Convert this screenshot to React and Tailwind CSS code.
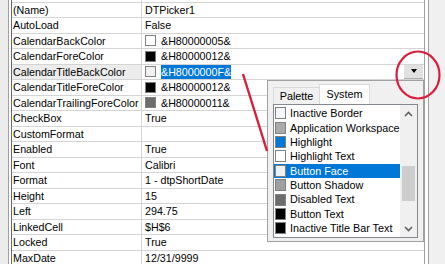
import React from 'react';

const rows = [
  { name: '(About)', value: '' },
  { name: '(Name)', value: 'DTPicker1' },
  { name: 'AutoLoad', value: 'False' },
  { name: 'CalendarBackColor', value: '&H80000005&', swatch: 'bg-white' },
  { name: 'CalendarForeColor', value: '&H80000012&', swatch: 'bg-black' },
  { name: 'CalendarTitleBackColor', value: '&H8000000F&', swatch: 'bg-[#f0f0f0]', selected: true },
  { name: 'CalendarTitleForeColor', value: '&H80000012&', swatch: 'bg-black' },
  { name: 'CalendarTrailingForeColor', value: '&H80000011&', swatch: 'bg-[#6d6d6d]' },
  { name: 'CheckBox', value: 'True' },
  { name: 'CustomFormat', value: '' },
  { name: 'Enabled', value: 'True' },
  { name: 'Font', value: 'Calibri' },
  { name: 'Format', value: '1 - dtpShortDate' },
  { name: 'Height', value: '15' },
  { name: 'Left', value: '294.75' },
  { name: 'LinkedCell', value: '$H$6' },
  { name: 'Locked', value: 'True' },
  { name: 'MaxDate', value: '12/31/9999' },
];

const systemColors = [
  { label: 'Inactive Border', swatch: 'bg-[#f4f7fc]' },
  { label: 'Application Workspace', swatch: 'bg-[#ababab]' },
  { label: 'Highlight', swatch: 'bg-[#0078d7]' },
  { label: 'Highlight Text', swatch: 'bg-white' },
  { label: 'Button Face', swatch: 'bg-[#f0f0f0]', selected: true },
  { label: 'Button Shadow', swatch: 'bg-[#a0a0a0]' },
  { label: 'Disabled Text', swatch: 'bg-[#6d6d6d]' },
  { label: 'Button Text', swatch: 'bg-black' },
  { label: 'Inactive Title Bar Text', swatch: 'bg-black' },
  { label: '', swatch: 'bg-white' },
];

const PropertyRow = ({ row }) => (
  <div className="flex h-[15.5px] shrink-0 border-b border-[#d4d4d4]">
    <div
      className={`w-[130px] shrink-0 border-r border-[#d4d4d4] pl-[1px] flex items-center whitespace-nowrap overflow-hidden ${
        row.selected ? 'bg-[#ececec]' : ''
      }`}
    >
      {row.name}
    </div>
    <div className="flex-1 flex items-center pl-[3px] whitespace-nowrap overflow-hidden relative">
      {row.swatch && (
        <span className={`w-[11px] h-[11px] border border-[#808080] shrink-0 mr-[5px] ${row.swatch}`}></span>
      )}
      <span className={row.selected ? 'bg-[#0078d7] text-white h-[14px] flex items-center' : ''}>{row.value}</span>
      {row.selected && (
        <span className="absolute right-[1px] top-[-1px] w-[19px] h-[15px] bg-[#e1e1e1] border-b border-[#adadad] flex items-center justify-center">
          <span className="w-0 h-0 border-l-[3.5px] border-r-[3.5px] border-t-[4px] border-l-transparent border-r-transparent border-t-black"></span>
        </span>
      )}
    </div>
  </div>
);

const ColorPopup = () => (
  <div className="absolute left-[267px] top-[80px] w-[157px] h-[162px] bg-[#f0f0f0] border border-[#a0a0a0] flex flex-col px-[5px] pt-[3px] text-[10.8px]">
    {/* Tabs */}
    <div className="flex items-end h-[20px] shrink-0">
      <div className="h-[17px] w-[46px] border-t border-l border-[#d9d9d9] flex items-center justify-center text-black">
        Palette
      </div>
      <div className="h-[20px] w-[51px] bg-white border-t border-l border-r border-[#d9d9d9] flex items-center justify-center text-black">
        System
      </div>
    </div>
    {/* List */}
    <div className="h-[134px] bg-white border border-[#828790] flex overflow-hidden">
      <div className="flex-1 flex flex-col pt-[1px] overflow-hidden">
        {systemColors.map((c, i) => (
          <div
            key={i}
            className={`h-[14.4px] shrink-0 flex items-center pl-[1px] whitespace-nowrap ${
              c.selected ? 'bg-[#0078d7] text-white' : 'text-black'
            }`}
          >
            <span className={`w-[11px] h-[12px] border border-[#808080] shrink-0 mr-[4px] ${c.swatch}`}></span>
            {c.label}
          </div>
        ))}
      </div>
      {/* Scrollbar */}
      <div className="w-[17px] shrink-0 bg-[#f0f0f0] flex flex-col items-center">
        <div className="h-[17px] flex items-center justify-center">
          <svg width="9" height="6" viewBox="0 0 9 6">
            <path d="M1 5 L4.5 1.5 L8 5" fill="none" stroke="#606060" strokeWidth="1.6" />
          </svg>
        </div>
        <div className="mt-[44px] w-[13px] h-[35px] bg-[#cdcdcd]"></div>
        <div className="flex-1"></div>
        <div className="h-[17px] flex items-center justify-center">
          <svg width="9" height="6" viewBox="0 0 9 6">
            <path d="M1 1 L4.5 4.5 L8 1" fill="none" stroke="#606060" strokeWidth="1.6" />
          </svg>
        </div>
      </div>
    </div>
  </div>
);

export default function App() {
  return (
    <div
      className="w-[445px] h-[264px] overflow-hidden relative bg-[#f0f0f0] flex text-black"
      style={{ fontFamily: '"Liberation Sans", Arial, sans-serif', fontSize: '10.7px' }}
    >
      {/* Left frame */}
      <div className="w-[8px] shrink-0 bg-[#ececec]"></div>
      <div className="w-[1px] shrink-0 bg-[#a0a0a0]"></div>
      <div className="w-[2px] shrink-0 bg-white"></div>
      <div className="w-[1px] shrink-0 bg-[#696969]"></div>

      {/* Property grid */}
      <div className="w-[412px] shrink-0 bg-white flex flex-col -mt-[12.8px]">
        {rows.map((r) => (
          <PropertyRow key={r.name} row={r} />
        ))}
      </div>

      {/* Right frame */}
      <div className="w-[1px] shrink-0 bg-[#a0a0a0]"></div>
      <div className="w-[3px] shrink-0 bg-white"></div>
      <div className="w-[1px] shrink-0 bg-[#a0a0a0]"></div>
      <div className="flex-1 bg-[#f0f0f0]"></div>

      <ColorPopup />

      {/* Annotation overlay */}
      <svg className="absolute inset-0 pointer-events-none" width="445" height="264" viewBox="0 0 445 264">
        <line x1="243" y1="74" x2="267" y2="151" stroke="#d81e3c" strokeWidth="2.4" />
        <ellipse cx="418" cy="75" rx="21.5" ry="23.5" fill="none" stroke="#d81e3c" strokeWidth="2.2" />
      </svg>
    </div>
  );
}
